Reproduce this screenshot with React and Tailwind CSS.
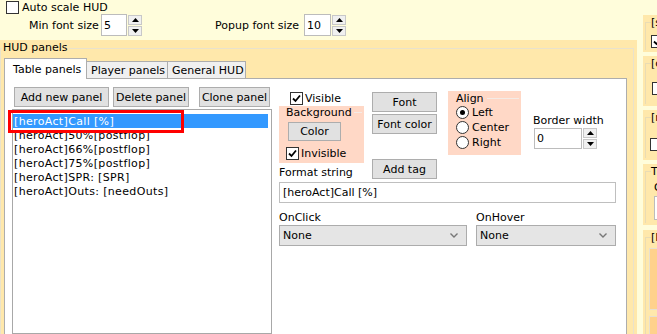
import React from "react";

const Check = ({ checked }) => (
  <span className="w-[13px] h-[13px] border border-[#333] bg-white flex items-center justify-center shrink-0">
    {checked && (
      <svg width="9" height="9" viewBox="0 0 9 9">
        <path d="M1 4.5 L3.5 7 L8 1.5" stroke="#000" strokeWidth="1.8" fill="none" />
      </svg>
    )}
  </span>
);

const Radio = ({ checked }) => (
  <span className="w-[13px] h-[13px] rounded-full border border-[#333] bg-white flex items-center justify-center shrink-0">
    {checked && <span className="w-[5px] h-[5px] rounded-full bg-black" />}
  </span>
);

const Spin = ({ h = "h-[21px]" }) => (
  <div className={`flex flex-col gap-[1px] ml-[1px] w-[14px] ${h}`}>
    <div className="flex-1 bg-[#f0f0f0] border border-[#c8c8c8] flex items-center justify-center">
      <svg width="7" height="4" viewBox="0 0 7 4">
        <path d="M0 4 L3.5 0 L7 4Z" fill="#000" />
      </svg>
    </div>
    <div className="flex-1 bg-[#f0f0f0] border border-[#c8c8c8] flex items-center justify-center">
      <svg width="7" height="4" viewBox="0 0 7 4">
        <path d="M0 0 L3.5 4 L7 0Z" fill="#000" />
      </svg>
    </div>
  </div>
);

const Btn = ({ className, children }) => (
  <div className={`bg-[#e1e1e1] border border-[#adadad] flex items-center justify-center ${className}`}>
    {children}
  </div>
);

const Select = ({ className }) => (
  <div className={`h-[21px] bg-[#e5e5e5] border border-[#acacac] flex items-center pl-[3px] pr-[8px] ${className}`}>
    <span className="flex-1">None</span>
    <svg width="8" height="5" viewBox="0 0 8 5">
      <path d="M0.5 0.5 L4 4 L7.5 0.5" stroke="#777" strokeWidth="1.4" fill="none" />
    </svg>
  </div>
);

const SideBox = ({ className, label, children }) => (
  <div className={`bg-[#ffe8ab] shrink-0 ${className}`}>
    <div className="mt-[7px] ml-[2px] h-[calc(100%-9px)] border-l border-t border-[#e9dcb4]">
      <div className="-mt-[7px] ml-[5px] bg-[#ffe8ab] w-fit whitespace-nowrap">{label}</div>
      {children}
    </div>
  </div>
);

const rows = [
  "[heroAct]Call [%]",
  "[heroAct]50%[postflop]",
  "[heroAct]66%[postflop]",
  "[heroAct]75%[postflop]",
  "[heroAct]SPR: [SPR]",
  "[heroAct]Outs: [needOuts]",
];

export default function App() {
  return (
    <div className="w-[657px] h-[334px] overflow-hidden bg-[#fffddb] flex text-[11px] leading-[13px] text-black font-['DejaVu_Sans',sans-serif]">
      {/* main column */}
      <div className="w-[637px] shrink-0 flex flex-col">
        <div className="h-[40px] shrink-0">
          <div className="flex items-center h-[14px] pl-[6px] pt-[1px]">
            <Check />
            <span className="ml-[3px]">Auto scale HUD</span>
          </div>
          <div className="flex items-center h-[22px] pl-[29px]">
            <span className="w-[72px] whitespace-nowrap">Min font size</span>
            <div className="w-[26px] h-[22px] bg-white border border-[#bcbcbc] flex items-center pl-[2px]">5</div>
            <Spin />
            <span className="ml-[73px] w-[89px] whitespace-nowrap">Popup font size</span>
            <div className="w-[27px] h-[22px] bg-white border border-[#bcbcbc] flex items-center pl-[2px]">10</div>
            <Spin />
          </div>
        </div>

        {/* HUD panels group */}
        <div className="flex-1 bg-[#ffe8ab] flex flex-col">
          <div className="mt-[8px] w-[634px] flex-1 border-t border-r border-l border-[#e9e2cc] flex flex-col">
            <div className="-mt-[8px] ml-[1px] px-[1px] bg-[#ffe8ab] w-fit">HUD panels</div>

            {/* tabs */}
            <div className="flex items-end h-[21px] mt-[3px] ml-[3px] relative z-10">
              <div className="w-[83px] h-[21px] -mb-[1px] bg-white border-t border-l border-r border-[#adadad] pl-[8px] pt-[4px]">Table panels</div>
              <div className="w-[81px] h-[17px] bg-[#f0f0f0] border-t border-r border-[#adadad] pl-[4px] pt-[2px]">Player panels</div>
              <div className="w-[78px] h-[17px] bg-[#f0f0f0] border-t border-r border-[#adadad] pl-[4px] pt-[2px]">General HUD</div>
            </div>

            {/* tab page */}
            <div className="ml-[3px] w-[623px] flex-1 bg-white border-t border-l border-r border-[#adadad] flex">
              {/* list column */}
              <div className="ml-[7px] w-[260px] flex flex-col">
                <div className="flex mt-[8px] pl-[2px]">
                  <Btn className="w-[95px] h-[20px]">Add new panel</Btn>
                  <Btn className="w-[76px] h-[20px] ml-[4px]">Delete panel</Btn>
                  <Btn className="w-[71px] h-[20px] ml-[10px]">Clone panel</Btn>
                </div>
                <div className="mt-[2px] flex-1 border border-[#a8a8a8] relative pt-[4px]">
                  {rows.map((r, i) => (
                    <div
                      key={r}
                      className={`h-[14px] w-[255px] pl-[1px] pt-[1px] whitespace-nowrap tracking-[0.35px] ${i === 0 ? "bg-[#3399ff] text-white" : ""}`}
                    >
                      {r}
                    </div>
                  ))}
                  <div className="absolute left-[-5px] top-[0px] w-[176px] h-[23px] border-[3px] border-[#ff0000]" />
                </div>
              </div>

              {/* editor area */}
              <div className="ml-[7px] flex flex-col">
                <div className="flex items-start">
                  {/* col A */}
                  <div className="w-[85px] flex flex-col">
                    <div className="mt-[13px] h-[13px] flex items-center pl-[11px]">
                      <Check checked />
                      <span className="ml-[2px]">Visible</span>
                    </div>
                    <div className="mt-[1px] h-[57px] bg-[#ffd8c6] flex flex-col">
                      <div className="flex items-center h-[13px] pl-[7px] pr-[2px]">
                        <span>Background</span>
                        <span className="flex-1 h-px bg-[#f4ebe6] ml-[2px]" />
                      </div>
                      <Btn className="ml-[9px] mt-[3px] w-[53px] h-[19px]">Color</Btn>
                      <div className="mt-[6px] h-[13px] flex items-center pl-[7px]">
                        <Check checked />
                        <span className="ml-[2px]">Invisible</span>
                      </div>
                    </div>
                    <div className="mt-[3px] h-[13px] whitespace-nowrap">Format string</div>
                  </div>

                  {/* col B */}
                  <div className="ml-[8px] w-[65px] flex flex-col">
                    <Btn className="mt-[13px] h-[20px]">Font</Btn>
                    <Btn className="mt-[2px] h-[20px]">Font color</Btn>
                    <Btn className="mt-[25px] h-[20px]">Add tag</Btn>
                  </div>

                  {/* col C */}
                  <div className="ml-[11px] mt-[12px] w-[73px] h-[64px] bg-[#ffd8c6] flex flex-col">
                    <div className="mt-[1px] flex items-center h-[13px] pl-[8px] pr-[2px]">
                      <span>Align</span>
                      <span className="flex-1 h-px bg-[#f4ebe6] ml-[3px]" />
                    </div>
                    <div className="h-[15px] flex items-center pl-[8px]">
                      <Radio checked />
                      <span className="ml-[3px]">Left</span>
                    </div>
                    <div className="h-[15px] flex items-center pl-[8px]">
                      <Radio />
                      <span className="ml-[3px]">Center</span>
                    </div>
                    <div className="h-[15px] flex items-center pl-[8px]">
                      <Radio />
                      <span className="ml-[3px]">Right</span>
                    </div>
                  </div>

                  {/* col D */}
                  <div className="ml-[12px] flex flex-col">
                    <div className="mt-[35px] h-[13px] whitespace-nowrap">Border width</div>
                    <div className="mt-[1px] ml-[1px] flex">
                      <div className="w-[48px] h-[21px] bg-white border border-[#bcbcbc] flex items-center pl-[2px]">0</div>
                      <Spin />
                    </div>
                  </div>
                </div>

                <div className="mt-[3px] w-[337px] h-[21px] border border-[#bfbfbf] flex items-center pl-[3px]">
                  [heroAct]Call [%]
                </div>
                <div className="mt-[8px] h-[13px] flex">
                  <span className="w-[197px]">OnClick</span>
                  <span>OnHover</span>
                </div>
                <div className="mt-[1px] flex">
                  <Select className="w-[188px]" />
                  <Select className="w-[140px] ml-[9px]" />
                </div>
              </div>
            </div>
          </div>
        </div>
      </div>

      {/* right column, cut off */}
      <div className="ml-[6px] flex-1 overflow-hidden flex flex-col pt-[15px]">
        <SideBox className="h-[37px] w-[30px]" label="[s">
          <div className="mt-[6px] ml-[5px]"><Check checked /></div>
        </SideBox>
        <SideBox className="mt-[4px] h-[50px] w-[30px]" label="[c">
          <div className="mt-[12px] ml-[6px]"><Check /></div>
        </SideBox>
        <SideBox className="mt-[4px] h-[50px] w-[30px]" label="[n">
          <div className="mt-[14px] ml-[4px]"><Check /></div>
        </SideBox>
        <SideBox className="mt-[4px] h-[61px] w-[30px]" label="T">
          <div className="mt-[3px] ml-[8px]">C</div>
          <div className="mt-[2px] ml-[8px] w-[30px] h-[24px] bg-white border border-[#bcbcbc]" />
        </SideBox>
        <SideBox className="mt-[5px] flex-1 w-[30px]" label="[I">
          <div className="mt-[4px] ml-[3px] w-[30px] h-[62px] bg-[#ffd18c] border border-[#e8e0d0]" />
          <div className="mt-[6px] ml-[3px] w-[30px] h-[30px] bg-[#ffd18c] border border-[#e8e0d0]" />
        </SideBox>
      </div>
    </div>
  );
}
